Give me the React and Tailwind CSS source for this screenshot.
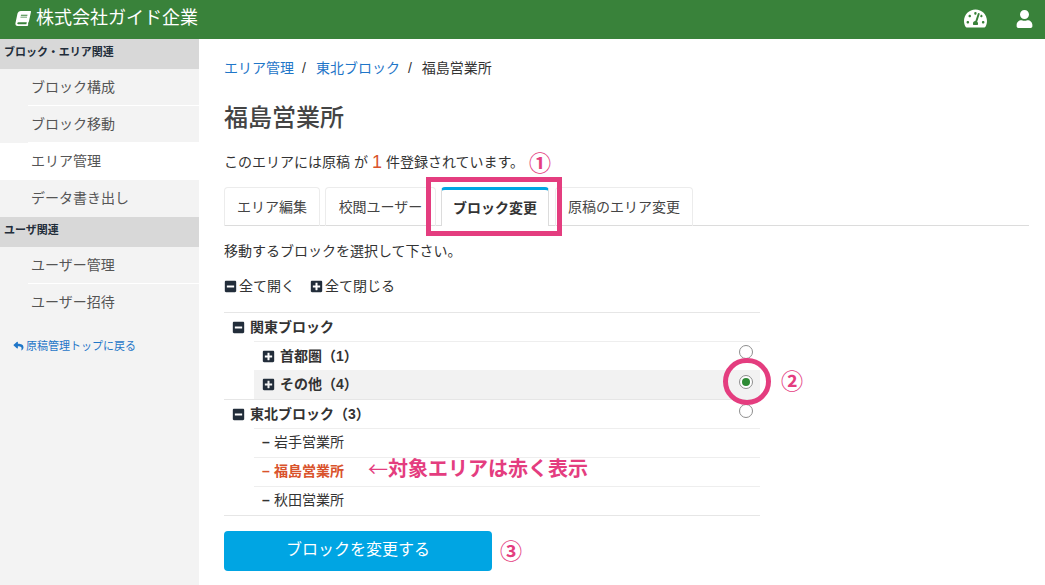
import { FaBook, FaTachometerAlt, FaUser, FaReply, FaMinusSquare, FaPlusSquare } from "react-icons/fa";

const font = { fontFamily: '"Liberation Sans", "Noto Sans CJK JP", sans-serif' };

const groups = [
  { title: "ブロック・エリア関連", items: ["ブロック構成", "ブロック移動", "エリア管理", "データ書き出し"], active: 2 },
  { title: "ユーザ関連", items: ["ユーザー管理", "ユーザー招待"] },
];

const tabs = [
  { label: "エリア編集", cls: "w-[96px]" },
  { label: "校閲ユーザー", cls: "w-[111px]" },
  { label: "ブロック変更", cls: "w-[108px]", active: true },
  { label: "原稿のエリア変更", cls: "ml-[1px] w-[138px]" },
];

function Radio({ checked, className }) {
  return (
    <span className={`${className} flex h-[14px] w-[14px] items-center justify-center rounded-full border border-[#8e8e8e] bg-white`}>
      {checked && <span className="h-[8px] w-[8px] rounded-full bg-[#2e8b35]" />}
    </span>
  );
}

function Leaf({ children, red }) {
  return (
    <div className={`flex h-[28px] items-center pl-[8px] pb-[1px] ${red ? "font-bold text-[#d9532c]" : "text-[#333]"}`}>
      <span className="mr-[4px] w-[8px] text-center font-bold">–</span>
      {children}
    </div>
  );
}

export default function App() {
  return (
    <div style={font} className="h-[585px] w-[1045px] overflow-hidden bg-white text-[14px] text-[#333]">
      <header className="flex h-[39px] items-center justify-between bg-[#39823a] pb-[2px] pl-[15px] pr-[12px] text-white">
        <div className="flex items-center gap-[5px] text-[18px]">
          <FaBook className="h-[15px] w-[16px] -skew-x-12" />
          <span>株式会社ガイド企業</span>
        </div>
        <div className="flex items-center gap-[29px]">
          <FaTachometerAlt className="h-[21px] w-[23px]" />
          <FaUser className="h-[18px] w-[17px]" />
        </div>
      </header>

      <div className="flex h-[546px]">
        <aside className="w-[199px] shrink-0 bg-[#f3f3f3]">
          {groups.map((g) => (
            <div key={g.title}>
              <div className="flex h-[30px] items-center bg-[#d8d8d8] pb-[3px] pl-[4px] text-[11px] font-bold text-[#222d3a]">{g.title}</div>
              {g.items.map((item, i) => (
                <div key={item} className={`pl-[28px] ${g.active === i ? "bg-white" : ""}`}>
                  <div className={`flex h-[37px] items-center pl-[3px] text-[14px] text-[#555] ${i < g.items.length - 1 ? "border-b border-white" : ""}`}>
                    {item}
                  </div>
                </div>
              ))}
            </div>
          ))}
          <div className="mt-[17px] flex items-center gap-[2px] pl-[13px] text-[11px] text-[#1f76c8]">
            <FaReply className="h-[10px] w-[11px]" />
            <span>原稿管理トップに戻る</span>
          </div>
        </aside>

        <main className="flex-1 pl-[25px] pr-[16px]">
          <nav className="mt-[19px] flex h-[20px] items-center text-[14px]">
            <span className="text-[#1f76c8]">エリア管理</span>
            <span className="ml-[8px] mr-[10px]">/</span>
            <span className="text-[#1f76c8]">東北ブロック</span>
            <span className="ml-[8px] mr-[10px]">/</span>
            <span>福島営業所</span>
          </nav>
          <h1 className="mt-[23px] h-[34px] text-[24px] font-medium leading-[34px] text-[#444]">福島営業所</h1>

          <div className="relative mt-[15px] flex h-[24px] items-center">
            <span>このエリアには原稿 が</span>
            <span className="mx-[4px] text-[18px] font-medium text-[#d9532c]">1</span>
            <span>件登録されています。</span>
            <span className="absolute left-[305px] top-[1px] text-[22px] font-bold leading-[26px] text-[#e43d7f]">①</span>
          </div>

          <div className="relative mt-[13px] flex h-[39px] gap-[5px] border-b border-[#dcdcdc]">
            {tabs.map((t) => (
              <div
                key={t.label}
                className={`${t.cls} flex h-[39px] items-center justify-center rounded-t-[4px] border border-b-0 text-[14px] ${
                  t.active
                    ? "border-x-[#dcdcdc] border-t-[3px] border-t-[#00a5e3] bg-white font-bold"
                    : "border-[#ececec] text-[#444]"
                }`}
              >
                {t.label}
              </div>
            ))}
            <div className="absolute left-[202px] top-[-10px] h-[59px] w-[136px] border-[5px] border-[#e43d7f]" />
          </div>

          <p className="mt-[15px] h-[20px] leading-[20px]">移動するブロックを選択して下さい。</p>

          <div className="mt-[15px] flex h-[20px] items-center gap-[15px]">
            <span className="flex items-center gap-[2px]">
              <FaMinusSquare className="h-[13px] w-[13px] text-[#222d3a]" />
              全て開く
            </span>
            <span className="flex items-center gap-[2px]">
              <FaPlusSquare className="h-[13px] w-[13px] text-[#222d3a]" />
              全て閉じる
            </span>
          </div>

          <div className="mt-[16px] w-[536px] border-t border-[#e6e6e6]">
            <div className="flex h-[28px] items-center gap-[5px] pl-[8px] font-bold">
              <FaMinusSquare className="h-[13px] w-[13px] text-[#222d3a]" />
              関東ブロック
            </div>
            <div className="ml-[30px] border-t border-[#eeeeee]">
              <div className="flex h-[28px] justify-between pl-[8px] pr-[7px]">
                <div className="flex items-center gap-[5px] font-bold">
                  <FaPlusSquare className="h-[13px] w-[13px] text-[#222d3a]" />
                  首都圏（1）
                </div>
                <Radio className="mt-[3px]" />
              </div>
              <div className="relative flex h-[29px] justify-between bg-[#f2f2f2] pl-[8px] pr-[7px]">
                <div className="flex items-center gap-[5px] font-bold">
                  <FaPlusSquare className="h-[13px] w-[13px] text-[#222d3a]" />
                  その他（4）
                </div>
                <Radio checked className="mt-[5px]" />
                <span className="absolute left-[469px] top-[-12px] h-[47px] w-[48px] rounded-full border-[5px] border-[#e43d7f]" />
                <span className="absolute left-[527px] top-[-1px] text-[22px] font-bold leading-[26px] text-[#e43d7f]">②</span>
              </div>
            </div>
            <div className="flex h-[29px] justify-between border-t border-[#e6e6e6] pl-[8px] pr-[7px]">
              <div className="flex items-center gap-[5px] font-bold">
                <FaMinusSquare className="h-[13px] w-[13px] text-[#222d3a]" />
                東北ブロック（3）
              </div>
              <Radio className="mt-[4px]" />
            </div>
            <div className="ml-[30px] border-t border-[#eeeeee]">
              <Leaf>岩手営業所</Leaf>
            </div>
            <div className="relative ml-[30px] border-t border-[#eeeeee]">
              <Leaf red>福島営業所</Leaf>
              <span className="absolute left-[114px] top-[-2px] flex text-[20px] font-bold leading-[26px] text-[#e43d7f]">
                <span className="font-['Noto_Sans_CJK_JP'] font-normal">←</span>
                対象エリアは赤く表示
              </span>
            </div>
            <div className="ml-[30px] border-t border-[#eeeeee]">
              <Leaf>秋田営業所</Leaf>
            </div>
            <div className="border-t border-[#e6e6e6]" />
          </div>

          <div className="relative mt-[15px] flex h-[40px] w-[268px] items-center justify-center rounded-[4px] bg-[#00a5e3] pb-[3px] text-[16px] text-white">
            ブロックを変更する
            <span className="absolute left-[276px] top-[8px] text-[22px] font-bold leading-[26px] text-[#e43d7f]">③</span>
          </div>
        </main>
      </div>
    </div>
  );
}
